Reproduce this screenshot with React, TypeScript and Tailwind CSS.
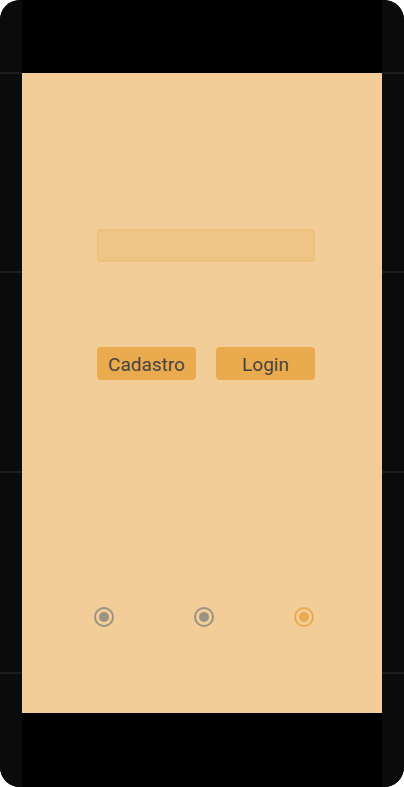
const Radio = ({ active }: { active?: boolean }) => {
  const ring = active ? "border-[#eaab4e]" : "border-[#9a9384]";
  const dot = active ? "bg-[#eaab4e]" : "bg-[#9a9384]";
  return (
    <div className={`w-5 h-5 rounded-full border-2 flex items-center justify-center ${ring}`}>
      <div className={`w-[10px] h-[10px] rounded-full ${dot}`} />
    </div>
  );
};

const SideRail = () => (
  <div className="w-[22px] bg-[#0b0b0b] flex flex-col">
    <div className="h-[72px]" />
    <div className="h-[2px] bg-[#1c1c1c]" />
    <div className="h-[197px]" />
    <div className="h-[2px] bg-[#1c1c1c]" />
    <div className="h-[198px]" />
    <div className="h-[2px] bg-[#1c1c1c]" />
    <div className="h-[199px]" />
    <div className="h-[2px] bg-[#1c1c1c]" />
    <div className="flex-1" />
  </div>
);

export default function App() {
  return (
    <div
      className="w-[404px] h-[787px] bg-white"
      style={{ fontFamily: "Roboto, 'Liberation Sans', sans-serif" }}
    >
      <div className="w-full h-full rounded-[20px] overflow-hidden bg-black flex">
        <SideRail />
        <div className="flex-1 flex flex-col">
          <div className="h-[73px] bg-black" />
          <div className="h-[640px] bg-[#f2cd98] flex flex-col items-center">
            <div className="h-[156px]" />
            <div className="pl-2">
              <div className="w-[218px] h-[33px] rounded-[3px] bg-[#efc585] border-2 border-[#edc07e]" />
            </div>
            <div className="h-[85px]" />
            <div className="pl-2 flex gap-5">
              <button className="w-[99px] h-[33px] pt-[3px] rounded-[4px] bg-[#eaab4e] text-[#474340] text-[19px]">
                Cadastro
              </button>
              <button className="w-[99px] h-[33px] pt-[3px] rounded-[4px] bg-[#eaab4e] text-[#474340] text-[19px]">
                Login
              </button>
            </div>
            <div className="h-[227px]" />
            <div className="pl-1">
              <div className="w-[220px] flex justify-between">
                <Radio />
                <Radio />
                <Radio active />
              </div>
            </div>
          </div>
          <div className="flex-1 bg-black" />
        </div>
        <SideRail />
      </div>
    </div>
  );
}
